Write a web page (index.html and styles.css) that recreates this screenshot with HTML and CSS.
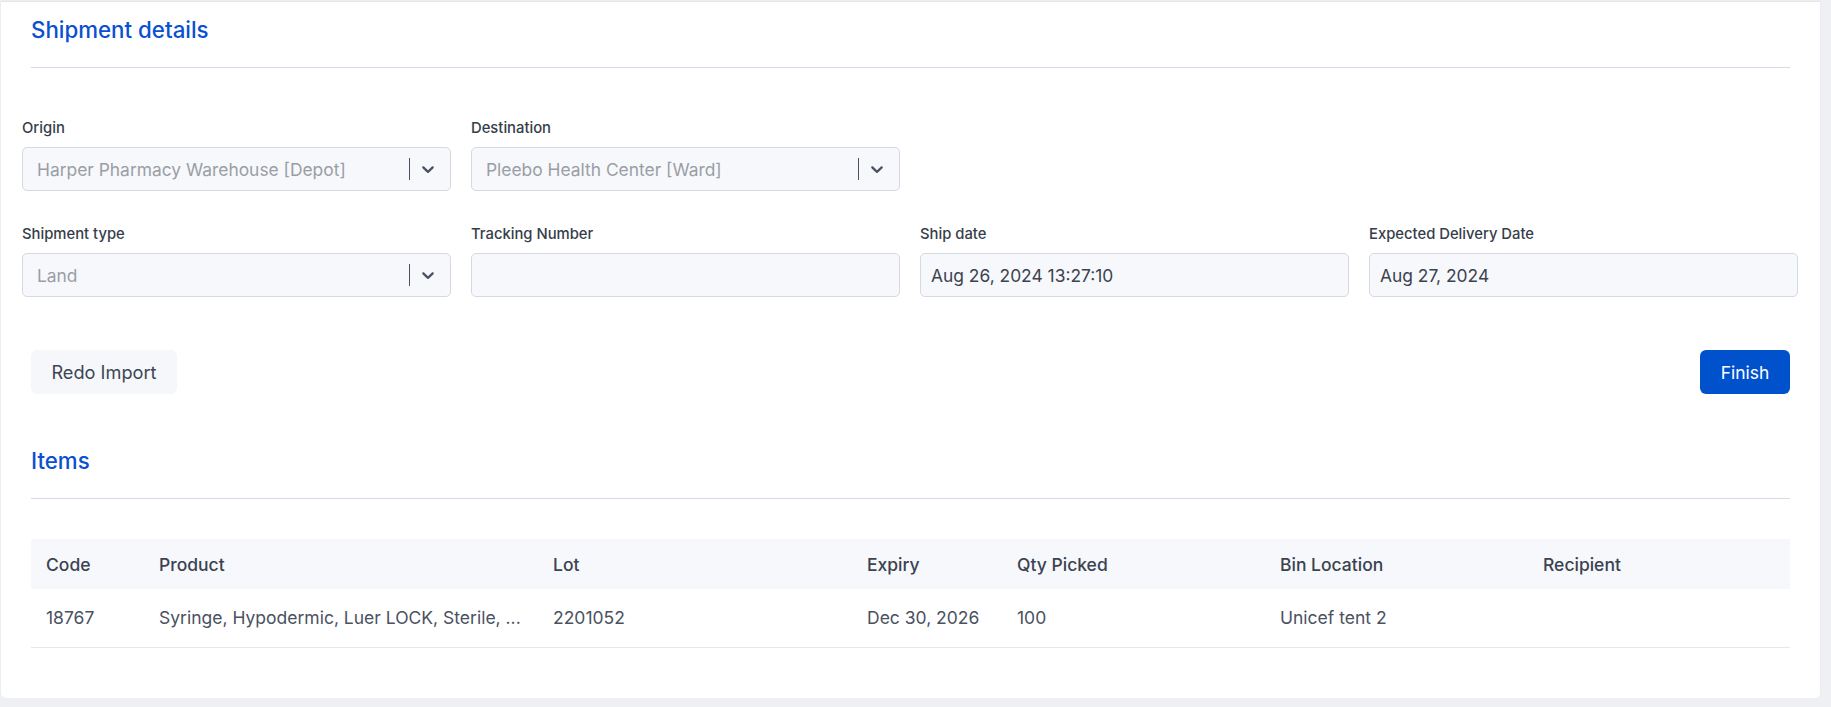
FILE: index.html
```html
<!DOCTYPE html>
<html>
<head>
<meta charset="utf-8">
<link rel="stylesheet" href="styles.css">
</head>
<body>
<div class="page">
  <div class="card">
    <h2 class="section-title">Shipment details</h2>
    <div class="form-grid">
      <div class="field">
        <label class="label">Origin</label>
        <div class="select">
          <span class="select-value">Harper Pharmacy Warehouse [Depot]</span>
          <span class="sep"></span>
          <span class="chev"><svg viewBox="0 0 20 20" width="20" height="20"><path d="M4.516 7.548c0.436-0.446 1.043-0.481 1.576 0l3.908 3.747 3.908-3.747c0.533-0.481 1.141-0.446 1.574 0 0.436 0.445 0.408 1.197 0 1.615-0.406 0.418-4.695 4.502-4.695 4.502-0.217 0.223-0.502 0.335-0.787 0.335s-0.57-0.112-0.789-0.335c0 0-4.287-4.084-4.695-4.502s-0.436-1.17 0-1.615z"/></svg></span>
        </div>
      </div>
      <div class="field">
        <label class="label">Destination</label>
        <div class="select">
          <span class="select-value">Pleebo Health Center [Ward]</span>
          <span class="sep"></span>
          <span class="chev"><svg viewBox="0 0 20 20" width="20" height="20"><path d="M4.516 7.548c0.436-0.446 1.043-0.481 1.576 0l3.908 3.747 3.908-3.747c0.533-0.481 1.141-0.446 1.574 0 0.436 0.445 0.408 1.197 0 1.615-0.406 0.418-4.695 4.502-4.695 4.502-0.217 0.223-0.502 0.335-0.787 0.335s-0.57-0.112-0.789-0.335c0 0-4.287-4.084-4.695-4.502s-0.436-1.17 0-1.615z"/></svg></span>
        </div>
      </div>
      <div class="field empty"></div>
      <div class="field empty"></div>

      <div class="field">
        <label class="label">Shipment type</label>
        <div class="select">
          <span class="select-value">Land</span>
          <span class="sep"></span>
          <span class="chev"><svg viewBox="0 0 20 20" width="20" height="20"><path d="M4.516 7.548c0.436-0.446 1.043-0.481 1.576 0l3.908 3.747 3.908-3.747c0.533-0.481 1.141-0.446 1.574 0 0.436 0.445 0.408 1.197 0 1.615-0.406 0.418-4.695 4.502-4.695 4.502-0.217 0.223-0.502 0.335-0.787 0.335s-0.57-0.112-0.789-0.335c0 0-4.287-4.084-4.695-4.502s-0.436-1.17 0-1.615z"/></svg></span>
        </div>
      </div>
      <div class="field">
        <label class="label">Tracking Number</label>
        <div class="input"></div>
      </div>
      <div class="field">
        <label class="label">Ship date</label>
        <div class="input">Aug 26, 2024 13:27:10</div>
      </div>
      <div class="field">
        <label class="label">Expected Delivery Date</label>
        <div class="input">Aug 27, 2024</div>
      </div>
    </div>

    <div class="actions">
      <button class="btn btn-secondary">Redo Import</button>
      <button class="btn btn-primary">Finish</button>
    </div>

    <h2 class="section-title items-title">Items</h2>

    <table class="items">
      <colgroup>
        <col class="c-code"><col class="c-product"><col class="c-lot"><col class="c-expiry"><col class="c-qty"><col class="c-bin"><col class="c-rec">
      </colgroup>
      <thead>
        <tr><th>Code</th><th>Product</th><th>Lot</th><th>Expiry</th><th>Qty Picked</th><th>Bin Location</th><th>Recipient</th></tr>
      </thead>
      <tbody>
        <tr><td>18767</td><td>Syringe, Hypodermic, Luer LOCK, Sterile, ...</td><td>2201052</td><td>Dec 30, 2026</td><td>100</td><td>Unicef tent 2</td><td></td></tr>
      </tbody>
    </table>
  </div>
</div>
</body>
</html>
```

FILE: styles.css
```css
* { box-sizing: border-box; }
html, body { margin: 0; padding: 0; }
body {
  background: #eff0f4;
  font-family: Inter, "Noto Sans", sans-serif;
  color: #3b4250;
}
.page {
  padding: 2px 11px 9px 1px;
}
.card {
  background: #ffffff;
  border-radius: 0 0 5px 5px;
  padding: 14px 30px 50px 30px;
  box-shadow: 0 -1px 2px rgba(0,0,0,0.06);
}
.section-title {
  margin: 0;
  font-size: 22.3px;
  line-height: 28px;
  font-weight: 500;
  color: #0a50d0;
  padding-bottom: 23px;
  border-bottom: 1px solid #d5dbe6;
}
.form-grid {
  display: grid;
  grid-template-columns: repeat(4, 1fr);
  column-gap: 20px;
  row-gap: 33px;
  margin: 50px -8px 0 -9px;
}
.field { display: flex; flex-direction: column; gap: 9px; }
.label {
  font-size: 14.8px;
  line-height: 20px;
  font-weight: 500;
  color: #363d4a;
}
.select, .input {
  height: 44px;
  border: 1px solid #d6d9e0;
  border-radius: 5px;
  background: #f7f8fb;
  display: flex;
  align-items: center;
  font-size: 17.4px;
}
.select { padding-left: 14px; padding-right: 4px; }
.select-value { flex: 1; color: #9a9ea6; white-space: nowrap; overflow: hidden; }
.sep { width: 1px; height: 22px; background: #4b5263; }
.chev { width: 36px; height: 36px; display: flex; align-items: center; justify-content: center; }
.chev svg { fill: #4b5263; width: 20px; height: 20px; }
.input { padding-left: 10px; color: #3b4250; }
.actions {
  display: flex;
  justify-content: space-between;
  margin-top: 53px;
}
.btn {
  font-family: Inter, "Noto Sans", sans-serif;
  font-size: 17.4px;
  height: 44px;
  border: none;
  border-radius: 6px;
  cursor: pointer;
  white-space: nowrap;
}
.btn-secondary { background: #f5f7fa; color: #3e4553; padding: 0 20px; font-size: 18.2px; width: 146px; }
.btn-primary { background: #0052cc; color: #ffffff; width: 90px; padding: 0; }
.items-title { margin-top: 53px; }
.items {
  width: 100%;
  border-collapse: collapse;
  table-layout: fixed;
  margin-top: 40px;
  font-size: 17.5px;
}
.c-code { width: 113px; }
.c-product { width: 394px; }
.c-lot { width: 314px; }
.c-expiry { width: 150px; }
.c-qty { width: 263px; }
.c-bin { width: 263px; }
.items th {
  background: #f6f8fb;
  text-align: left;
  font-weight: 500;
  color: #3b4250;
  height: 50px;
  padding: 0 15px;
}
.items td {
  height: 58px;
  padding: 0 15px;
  color: #4a5160;
  border-bottom: 1px solid #e5e7eb;
  white-space: nowrap;
  overflow: hidden;
}
```
